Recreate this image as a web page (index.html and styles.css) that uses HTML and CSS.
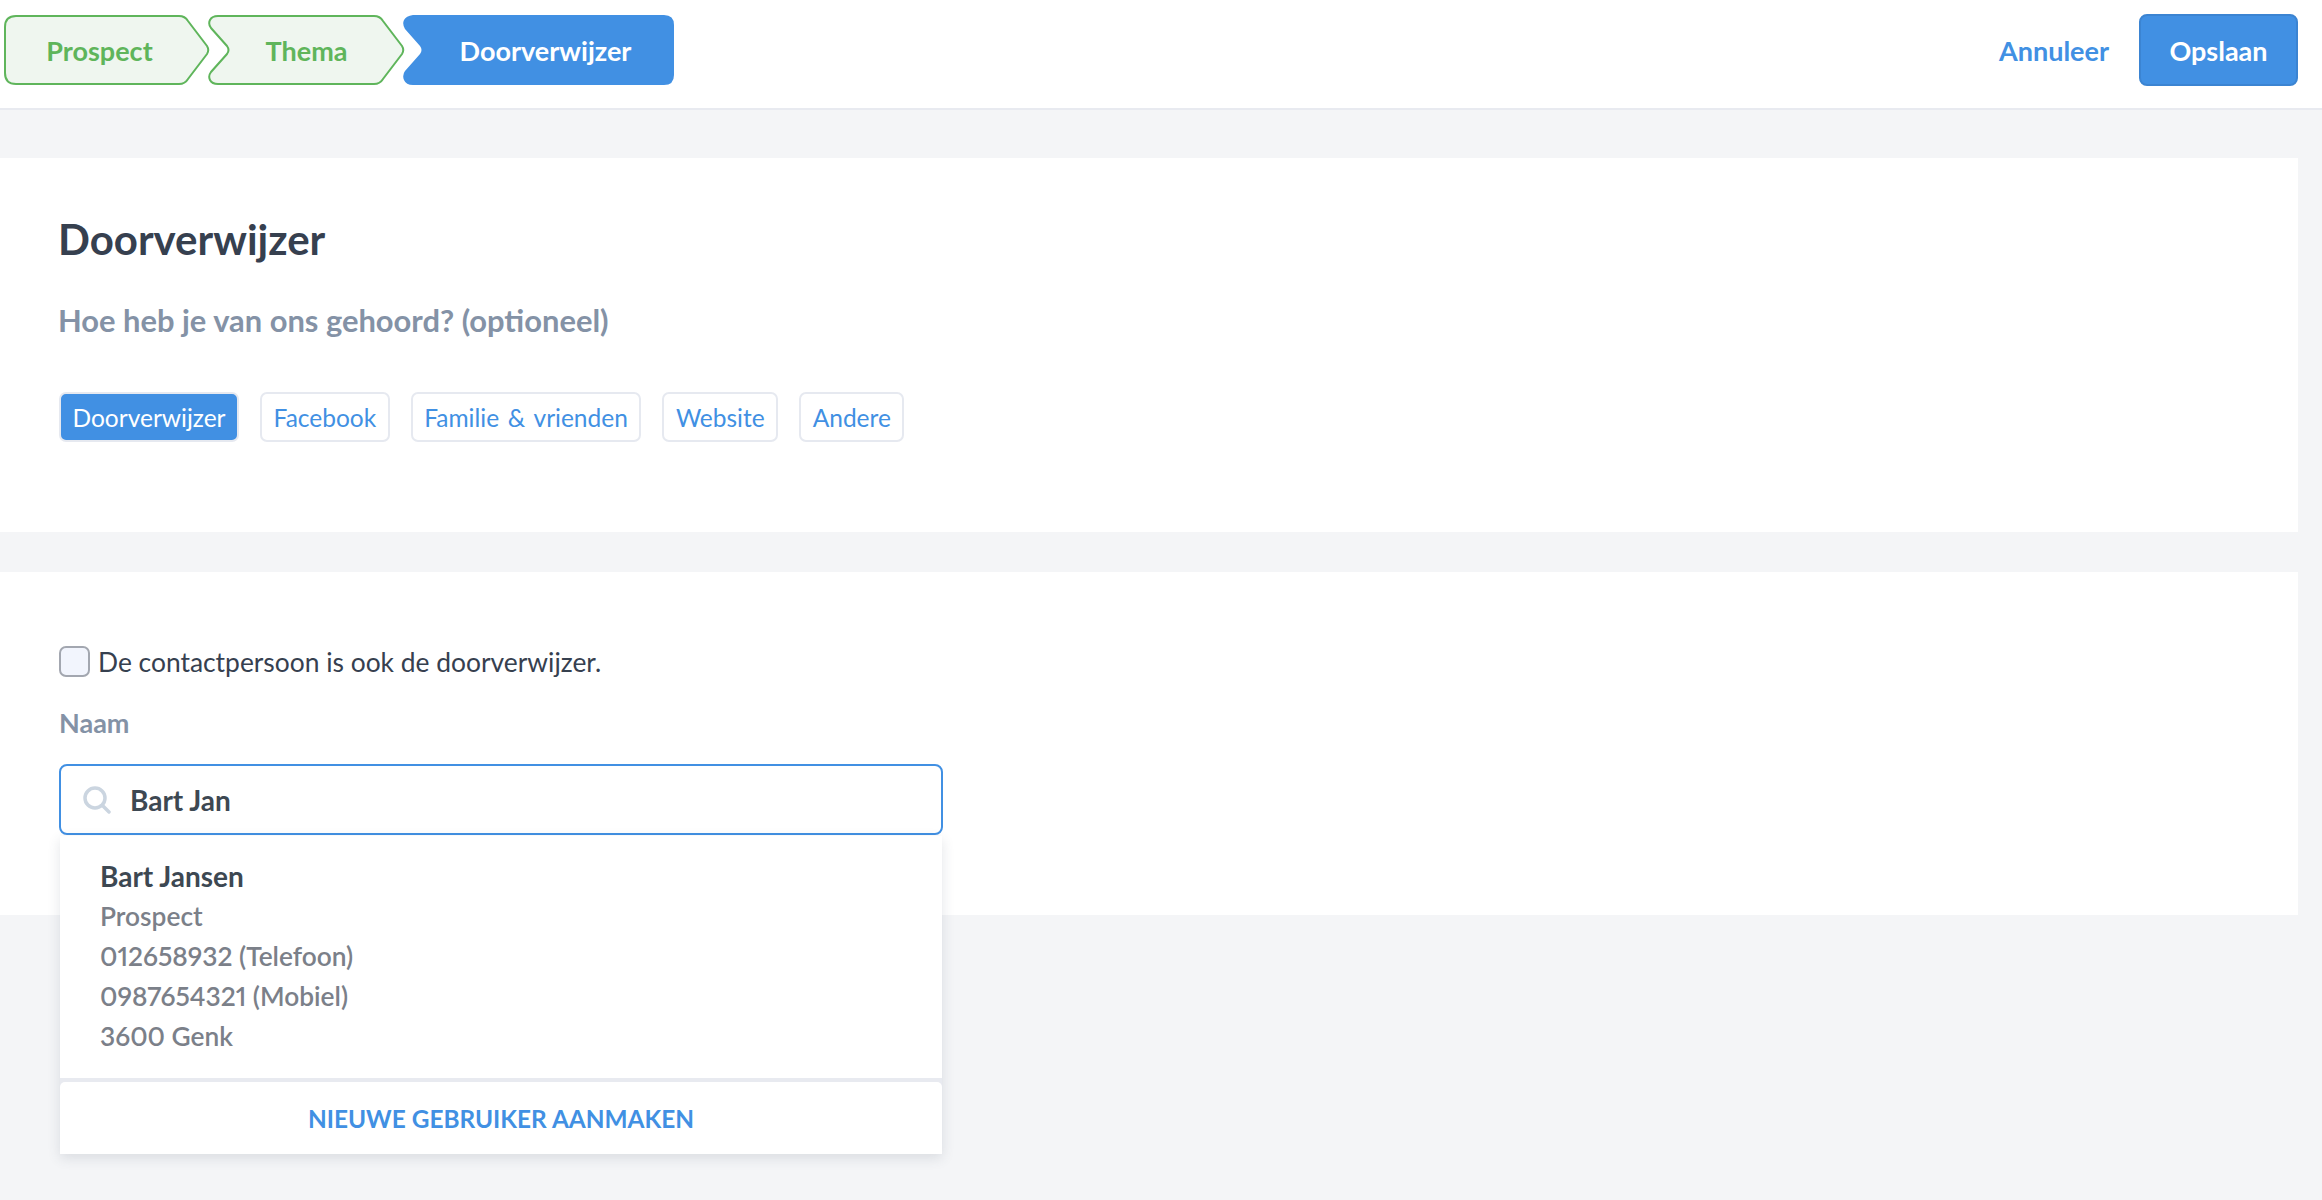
FILE: index.html
```html
<!DOCTYPE html>
<html lang="nl">
<head>
<meta charset="utf-8">
<title>Doorverwijzer</title>
<link rel="stylesheet" href="styles.css">
</head>
<body>
<header class="topbar">
  <nav class="steps">
    <div class="step step-first">
      <svg class="step-bg" width="206" height="70" viewBox="0 0 206 70"><path class="done" d="M12 1H175Q181 1 184 6L203 31Q205.500 35 203 39L184 64Q181 69 175 69H12Q1 69 1 58V12Q1 1 12 1Z"/></svg>
      <span class="step-label step-label-done">Prospect</span>
    </div>
    <div class="step step-second">
      <svg class="step-bg" width="197" height="70" viewBox="0 0 197 70"><path class="done" d="M10 1H166Q172 1 175 6L194 31Q196.500 35 194 39L175 64Q172 69 166 69H10Q4 69 2 65T3 57L19 39Q22 35 19 31L3 13Q0 9 2 5T10 1Z"/></svg>
      <span class="step-label step-label-done">Thema</span>
    </div>
    <div class="step step-third">
      <svg class="step-bg" width="271" height="70" viewBox="0 0 271 70"><path class="current" d="M10 0H261Q271 0 271 10V60Q271 70 261 70H10Q3 70 1 65T2 56L17 39Q20 35 17 31L2 14Q-1 9 1 5T10 0Z"/></svg>
      <span class="step-label step-label-current">Doorverwijzer</span>
    </div>
  </nav>
  <div class="actions">
    <a class="cancel">Annuleer</a>
    <button class="save">Opslaan</button>
  </div>
</header>
<main class="content">
  <section class="card card-source">
    <h1 class="title">Doorverwijzer</h1>
    <p class="subtitle">Hoe heb je van ons gehoord? (optioneel)</p>
    <div class="chips">
      <span class="chip chip-active">Doorverwijzer</span>
      <span class="chip">Facebook</span>
      <span class="chip">Familie &amp; vrienden</span>
      <span class="chip">Website</span>
      <span class="chip">Andere</span>
    </div>
  </section>
  <section class="card card-referrer">
    <label class="check">
      <span class="checkbox"></span>
      <span>De contactpersoon is ook de doorverwijzer.</span>
    </label>
    <div class="field-label">Naam</div>
    <div class="search">
      <div class="search-box">
        <svg class="search-icon" width="28" height="28" viewBox="0 0 28 28"><circle cx="12" cy="12" r="10" /><path d="M19.500 19.500L26 26"/></svg>
        <span class="search-value">Bart Jan</span>
      </div>
      <div class="dropdown">
        <div class="result">
          <div class="result-name">Bart Jansen</div>
          <div>Prospect</div>
          <div>012658932 (Telefoon)</div>
          <div>0987654321 (Mobiel)</div>
          <div>3600 Genk</div>
        </div>
        <div class="new-user-wrap">
          <div class="new-user">NIEUWE GEBRUIKER AANMAKEN</div>
        </div>
      </div>
    </div>
  </section>
</main>
</body>
</html>
```
FILE: styles.css
```css
* { box-sizing: border-box; }
html, body { margin: 0; height: 100%; }
body {
  background: #f4f5f7;
  font-family: "Lato", "Noto Sans", sans-serif;
  font-size: 27px;
  color: #3d4852;
  overflow: hidden;
}
.topbar {
  height: 110px;
  background: #fff;
  border-bottom: 2px solid #e8eaf0;
  display: flex;
  align-items: center;
  justify-content: space-between;
  padding: 0 24px 8px 4px;
}
.steps { display: flex; }
.step {
  position: relative;
  height: 70px;
  display: flex;
  align-items: center;
  justify-content: center;
  font-weight: 700;
}
.step-first { width: 206px; margin-right: -2px; padding-right: 15px; }
.step-second { width: 197px; margin-right: -2px; }
.step-third { width: 271px; padding-left: 14px; }
.step-bg { position: absolute; left: 0; top: 0; }
.done { fill: #eff6ef; stroke: #5fb55b; stroke-width: 2; }
.current { fill: #4190e3; }
.step-label { position: relative; }
.step-label-done { color: #5fb55b; }
.step-label-current { color: #fff; }
.actions { display: flex; align-items: center; gap: 30px; }
.cancel { color: #4190e3; font-weight: 700; }
.save {
  width: 159px;
  height: 72px;
  background: #4190e3;
  border: 2px solid #3b84d2;
  border-radius: 8px;
  color: #fff;
  font: inherit;
  font-weight: 700;
}
.content {
  padding: 48px 24px 0 0;
  display: flex;
  flex-direction: column;
  gap: 40px;
}
.card { background: #fff; padding: 0 59px; }
.card-source { height: 374px; padding-top: 56px; }
.card-referrer { height: 343px; padding-top: 74px; }
.title { margin: 0 0 0 -1px; font-size: 42px; line-height: 50px; font-weight: 700; color: #36404f; }
.subtitle { margin: 38px 0 0 -1px; font-size: 30.900px; line-height: 38px; font-weight: 700; color: #8492a6; }
.chips { display: flex; gap: 21px; margin-top: 52px; }
.chip {
  height: 50px;
  padding: 0 11.500px;
  display: flex;
  align-items: center;
  border: 2px solid #e6e9f0;
  border-radius: 7px;
  color: #4190e3;
  font-size: 24.500px;
  word-spacing: 2.500px;
}
.chip-active { background: #4190e3; color: #fff; }
.check { display: flex; align-items: center; gap: 8px; color: #36404f; height: 31px; font-size: 26.400px; }
.checkbox {
  width: 31px;
  height: 31px;
  background: #f2f5fd;
  border: 2px solid #a3a7b0;
  border-radius: 7px;
}
.field-label { margin-top: 29px; line-height: 34px; font-weight: 700; color: #8492a6; }
.search { position: relative; width: 884px; margin-top: 24px; }
.search-box {
  height: 71px;
  display: flex;
  align-items: center;
  gap: 19px;
  padding-left: 22px;
  background: #fff;
  border: 2px solid #4190e3;
  border-radius: 8px;
}
.search-icon { fill: none; stroke: #cbd5e0; stroke-width: 3.500; stroke-linecap: round; }
.search-value { font-weight: 700; color: #3d4852; font-size: 28px; }
.dropdown {
  position: absolute;
  left: 1px;
  right: 1px;
  top: 72px;
  background: #fff;
  box-shadow: 0 4px 12px rgba(60, 70, 90, .14);
}
.result {
  height: 242px;
  padding: 20px 40px 0;
  line-height: 40px;
  color: #7b8089;
  font-weight: 600;
  font-size: 26.300px;
  font-variant-numeric: proportional-nums;
}
.result-name { color: #3d4852; font-size: 28px; font-weight: 700; }
.new-user-wrap { padding-top: 4px; background: #e8eaf0; }
.new-user {
  height: 72px;
  background: #fff;
  border-radius: 5px 5px 0 0;
  display: flex;
  align-items: center;
  justify-content: center;
  color: #4190e3;
  font-weight: 700;
  font-size: 24.400px;
}
```
